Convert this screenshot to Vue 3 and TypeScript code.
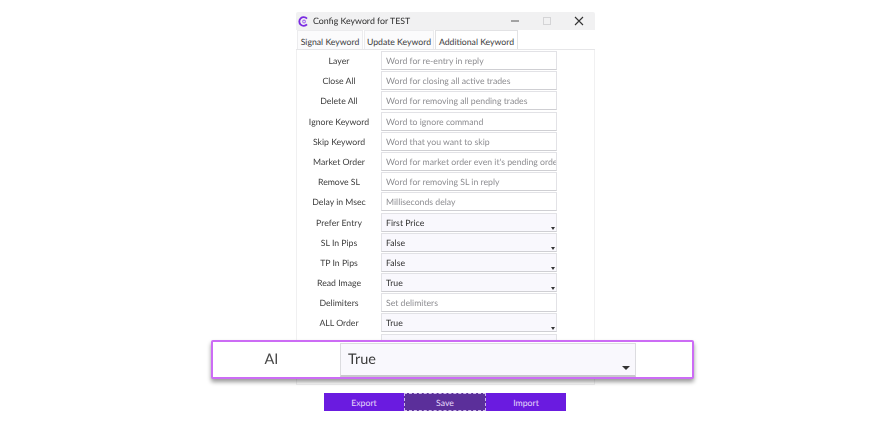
<template>
  <div class="page">
    <div class="window">
      <!-- Title bar -->
      <header class="titlebar">
        <svg class="logo" viewBox="0 0 12 12" width="11" height="11">
          <path d="M9.8 2.8A4.8 4.8 0 1 0 9.8 9.2" fill="none" stroke="#7a2be2" stroke-width="2" />
          <circle cx="6.6" cy="6" r="1.5" fill="none" stroke="#a46cf0" stroke-width="1.1" />
        </svg>
        <span class="title">Config Keyword for TEST</span>
        <div class="win-buttons">
          <svg viewBox="0 0 10 10" width="10" height="10"><path d="M1 5h8" stroke="#555" stroke-width="1" /></svg>
          <svg viewBox="0 0 10 10" width="10" height="10"><rect x="1.5" y="1.5" width="7" height="7" fill="none" stroke="#d4d4d6" /></svg>
          <svg viewBox="0 0 10 10" width="10" height="10"><path d="M1 1l8 8M9 1l-8 8" stroke="#333" stroke-width="1.1" /></svg>
        </div>
      </header>

      <!-- Tabs -->
      <nav class="tabs">
        <div v-for="tab in tabs" :key="tab" class="tab" :class="{ active: tab === activeTab }">{{ tab }}</div>
      </nav>

      <!-- Form -->
      <div class="form">
        <div v-for="row in rows" :key="row.label" class="row">
          <div class="label">{{ row.label }}</div>
          <div v-if="row.value" class="field select">
            {{ row.value }}
            <span class="caret" />
          </div>
          <div v-else class="field placeholder">{{ row.placeholder }}</div>
        </div>
      </div>

      <!-- Footer -->
      <footer class="actions">
        <div class="btn">Export</div>
        <div class="btn focused">Save</div>
        <div class="btn">Import</div>
      </footer>
    </div>

    <!-- Highlighted row -->
    <div class="highlight">
      <div class="hl-label">AI</div>
      <div class="hl-select">
        True
        <span class="hl-caret" />
      </div>
    </div>
  </div>
</template>

<script setup lang="ts">
interface Row {
  label: string
  placeholder?: string
  value?: string
}

const tabs = ['Signal Keyword', 'Update Keyword', 'Additional Keyword']
const activeTab = 'Additional Keyword'

const rows: Row[] = [
  { label: 'Layer', placeholder: 'Word for re-entry in reply' },
  { label: 'Close All', placeholder: 'Word for closing all active trades' },
  { label: 'Delete All', placeholder: 'Word for removing all pending trades' },
  { label: 'Ignore Keyword', placeholder: 'Word to ignore command' },
  { label: 'Skip Keyword', placeholder: 'Word that you want to skip' },
  { label: 'Market Order', placeholder: "Word for market order even it's pending order" },
  { label: 'Remove SL', placeholder: 'Word for removing SL in reply' },
  { label: 'Delay in Msec', placeholder: 'Milliseconds delay' },
  { label: 'Prefer Entry', value: 'First Price' },
  { label: 'SL In Pips', value: 'False' },
  { label: 'TP In Pips', value: 'False' },
  { label: 'Read Image', value: 'True' },
  { label: 'Delimiters', placeholder: 'Set delimiters' },
  { label: 'ALL Order', value: 'True' },
  { label: 'AI', value: 'True' }
]
</script>

<style>
html,
body {
  margin: 0;
  background: #ffffff;
}
</style>

<style scoped>
.page {
  position: relative;
  width: 890px;
  height: 430px;
  overflow: hidden;
  background: #ffffff;
  font-family: Lato, "Open Sans", sans-serif;
  text-rendering: geometricPrecision;
}

.window {
  width: 299px;
  height: 408px;
  margin: 0 0 0 296px;
  position: relative;
  top: 12px;
  display: flex;
  flex-direction: column;
  filter: blur(0.55px);
}

.titlebar {
  height: 18px;
  flex: none;
  display: flex;
  align-items: center;
  padding-left: 2px;
  gap: 4px;
  background: #f1f1f2;
  border-radius: 2px 2px 0 0;
}

.title {
  font-size: 8.8px;
  color: #2e2e2e;
  flex: 1;
  padding-bottom: 1px;
}

.win-buttons {
  display: flex;
  align-items: center;
  gap: 22px;
  padding-right: 11px;
}

.tabs {
  height: 19px;
  flex: none;
  display: flex;
  align-items: stretch;
  margin-top: 0;
  padding-left: 1px;
  border-bottom: 1px solid #e6e6e8;
}

.tab {
  box-sizing: border-box;
  justify-content: center;
  width: 66px;
  padding-top: 2px;
  display: flex;
  align-items: center;
  font-size: 8.7px;
  color: #3c3c3c;
  background: #fbfbfc;
  border: 1px solid #ececee;
  border-bottom: none;
  margin-right: 1px;
}

.tab:nth-child(2) {
  width: 70px;
}

.tab.active {
  width: 83px;
  background: #ffffff;
  border-color: #e2e2e4;
}

.form {
  height: 335px;
  flex: none;
  overflow: hidden;
  display: flex;
  flex-direction: column;
  gap: 1.2px;
  padding-top: 1px;
  box-sizing: border-box;
  border-left: 1px solid #f0f0f1;
  border-right: 1px solid #f0f0f1;
  border-bottom: 1px solid #f0f0f1;
}

.row {
  display: flex;
  align-items: center;
  height: 19px;
  flex: none;
}

.label {
  width: 84px;
  flex: none;
  text-align: center;
  font-size: 8.7px;
  color: #404040;
}

.field {
  width: 176px;
  height: 19px;
  box-sizing: border-box;
  padding: 0 0 0 4px;
  display: flex;
  align-items: center;
  font-size: 8.7px;
  white-space: nowrap;
  overflow: hidden;
  position: relative;
  border: 1px solid #e2e2e6;
  border-bottom: 1.5px solid #cfcfd3;
}

.placeholder {
  color: #8e8e92;
  background: #ffffff;
}

.select {
  color: #303030;
  background: #f9f8fd;
}

.caret {
  position: absolute;
  right: 1px;
  bottom: 1px;
  border-left: 2.5px solid transparent;
  border-right: 2.5px solid transparent;
  border-top: 3px solid #333333;
}

.actions {
  display: flex;
  justify-content: center;
  margin-top: 8px;
  margin-right: 1px;
}

.btn {
  width: 80px;
  height: 18px;
  display: flex;
  align-items: center;
  justify-content: center;
  font-size: 8.7px;
  color: #e6d8fa;
  background: #6a1be0;
}

.btn.focused {
  width: 82px;
  background: #5b2f9a;
  outline: 1px dashed #cdb8ec;
  outline-offset: -1px;
}

.highlight {
  position: absolute;
  left: 211px;
  top: 340px;
  width: 483px;
  height: 39px;
  box-sizing: border-box;
  display: flex;
  align-items: center;
  background: #ffffff;
  border: 2px solid #cc6cf5;
  border-radius: 2px;
  box-shadow: 0 3px 4px rgba(0, 0, 0, 0.4);
}

.hl-label {
  width: 117px;
  flex: none;
  text-align: center;
  font-size: 14.5px;
  color: #4a4a4a;
  margin-right: 10px;
  filter: blur(0.4px);
}

.hl-select {
  width: 296px;
  height: 34px;
  box-sizing: border-box;
  padding: 1px 0 0 7px;
  display: flex;
  align-items: center;
  position: relative;
  font-size: 14.5px;
  color: #3c3c3c;
  background: #f9f8fd;
  border: 1px solid #dcdce0;
  border-bottom: 2px solid #c8c8cc;
  filter: blur(0.4px);
}

.hl-caret {
  position: absolute;
  right: 5px;
  bottom: 5px;
  border-left: 4px solid transparent;
  border-right: 4px solid transparent;
  border-top: 4px solid #333333;
}
</style>
